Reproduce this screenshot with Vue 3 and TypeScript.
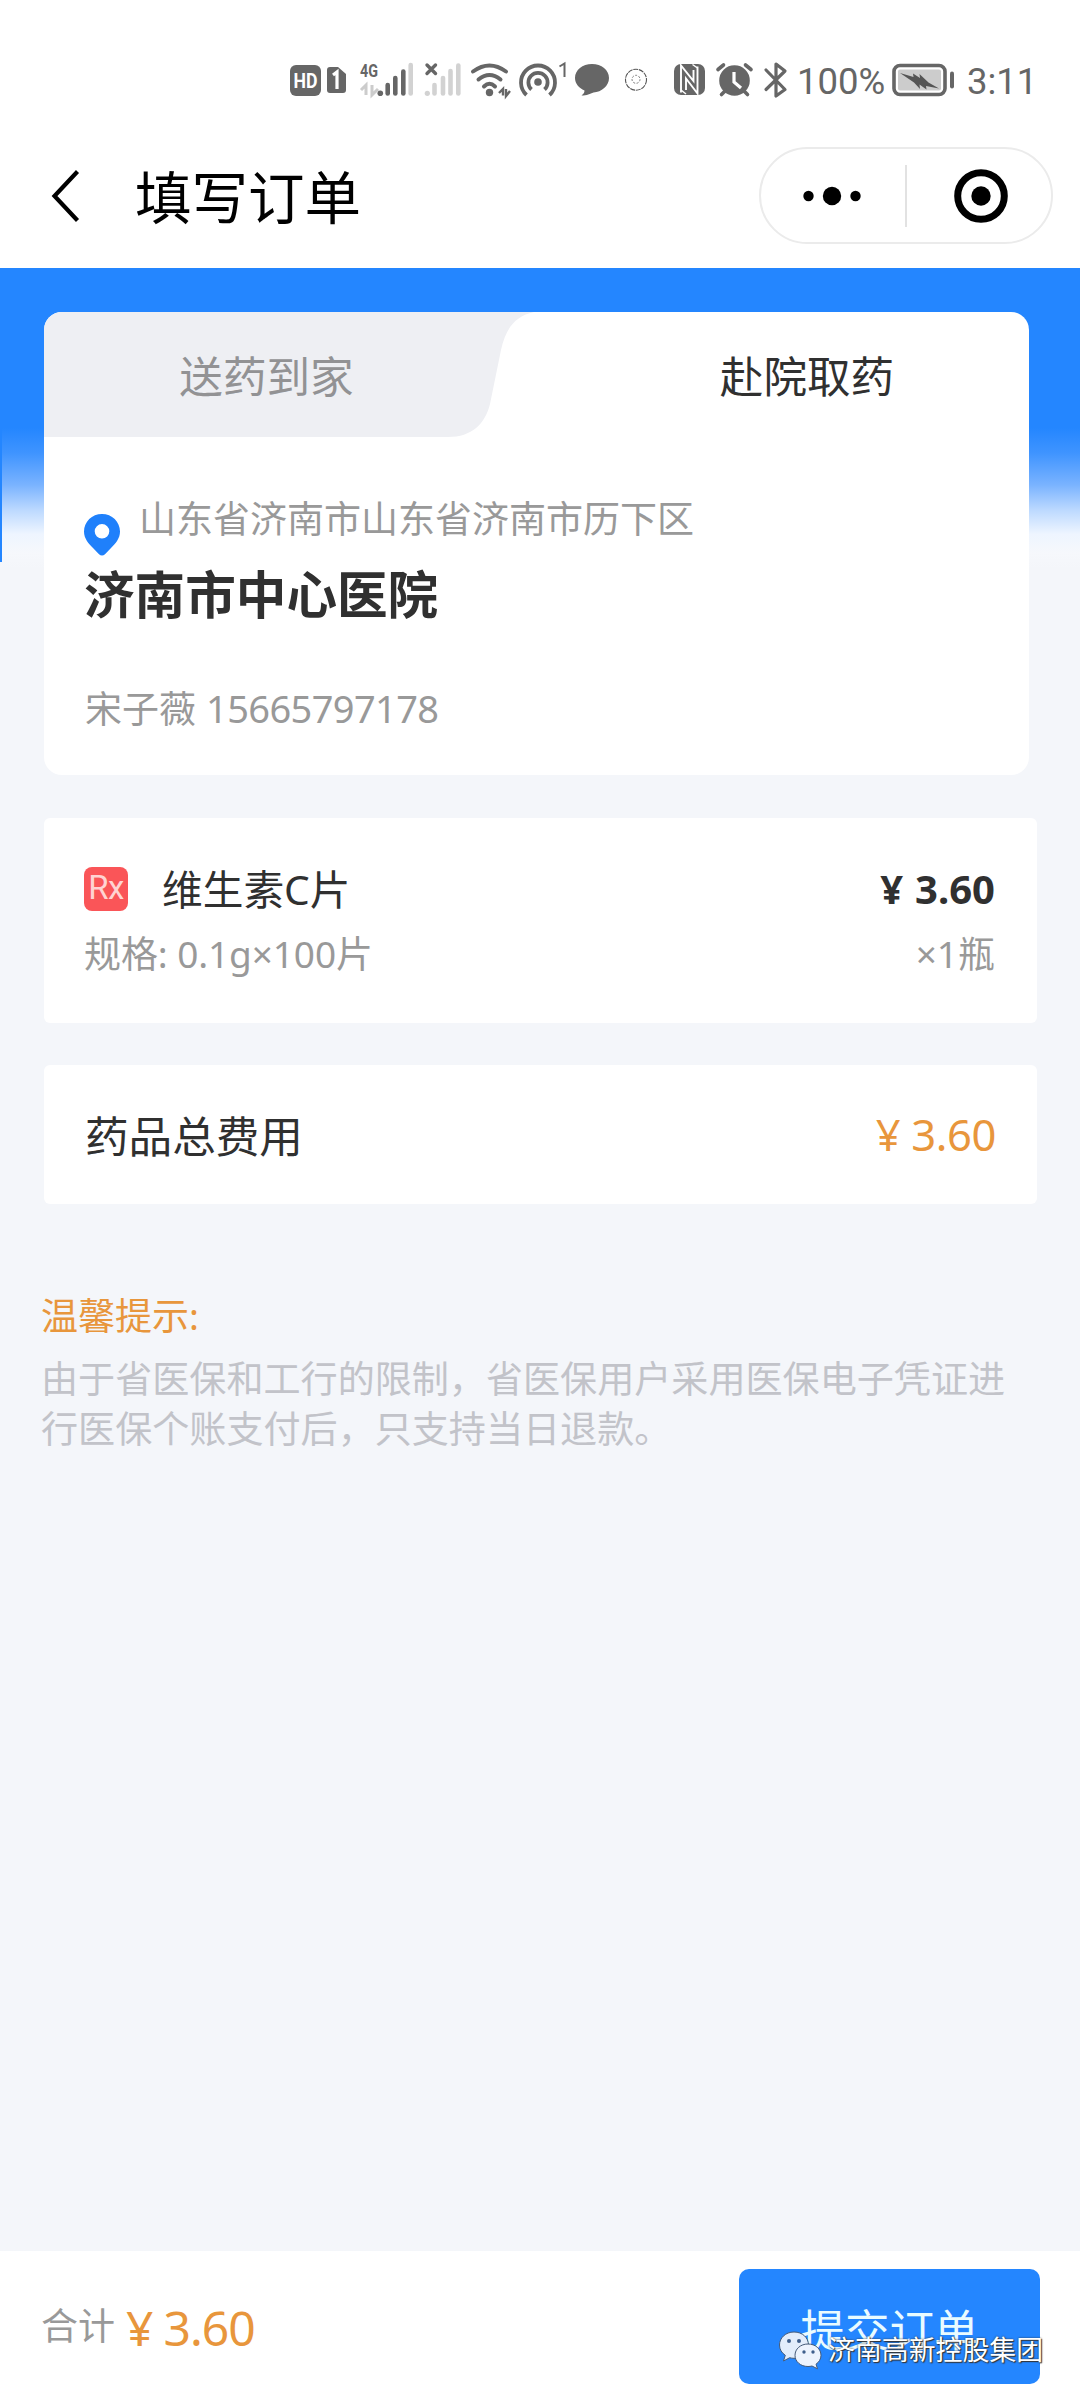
<script setup lang="ts">
interface Medicine {
  name: string
  spec: string
  price: string
  count: string
}

const pickup = {
  region: '山东省济南市山东省济南市历下区',
  hospital: '济南市中心医院',
  contact: '宋子薇',
  phone: '15665797178',
}

const medicine: Medicine = {
  name: '维生素C片',
  spec: '规格: 0.1g×100片',
  price: '3.60',
  count: '×1瓶',
}

const total = '3.60'
const notice = '由于省医保和工行的限制，省医保用户采用医保电子凭证进行医保个账支付后，只支持当日退款。'

const signalBars = [
  { x: 107.7, top: 27 },
  { x: 115.3, top: 20 },
  { x: 123.3, top: 13.5 },
]
const idleBars = [
  { x: 154.5, top: 28 },
  { x: 163, top: 21 },
  { x: 170.5, top: 14 },
  { x: 178.3, top: 8.5 },
]
</script>

<template>
  <div class="page" lang="zh-CN">
    <div class="status">
      <svg class="status-left" width="370" height="48" viewBox="0 0 370 48" fill="none">
        <!-- HD voice -->
        <rect x="10" y="9" width="31" height="31" rx="6" fill="#666" />
        <text x="25.5" y="31.5" class="hd" textLength="24" lengthAdjust="spacingAndGlyphs">HD</text>
        <!-- SIM 1 -->
        <path d="M50 11h8l8 7v16a3 3 0 0 1-3 3H50a3 3 0 0 1-3-3V14a3 3 0 0 1 3-3z" fill="#666" />
        <path d="M53 19l4-3v17" stroke="#fff" stroke-width="3.2" />
        <!-- 4G signal -->
        <text x="80" y="20.8" class="net" textLength="18" lengthAdjust="spacingAndGlyphs">4G</text>
        <path d="M86 39V29l-5 5M92 29v10l6-6" stroke="#ccc" stroke-width="3" />
        <circle cx="100.3" cy="37.3" r="2.8" fill="#666" />
        <path
          v-for="bar in signalBars"
          :key="bar.x"
          :d="`M${bar.x} ${bar.top + 2}V37.5`"
          stroke="#666"
          stroke-width="4.6"
          stroke-linecap="round"
        />
        <path d="M130.7 9V37.5" stroke="#d2d2d2" stroke-width="4.6" stroke-linecap="round" />
        <!-- second SIM, no service -->
        <path d="M147 9l8.5 8.5M155.5 9l-8.5 8.5" stroke="#666" stroke-width="3.4" stroke-linecap="round" />
        <circle cx="147.3" cy="37.3" r="2.6" fill="#d2d2d2" />
        <path
          v-for="bar in idleBars"
          :key="bar.x"
          :d="`M${bar.x} ${bar.top + 1}V37.5`"
          stroke="#d2d2d2"
          stroke-width="4.6"
          stroke-linecap="round"
        />
        <!-- Wi-Fi -->
        <g stroke="#666" stroke-width="4" stroke-linecap="round">
          <path d="M193 15.5Q209.5 3.5 226 15.5" />
          <path d="M198.5 23.5Q209.5 14.5 220.5 23.5" />
          <path d="M204 30.5Q209.5 25 215 30.5" />
        </g>
        <circle cx="209.5" cy="36.5" r="3.7" fill="#666" />
        <path d="M223 39.5V33l-4 4M226 33v7l4-5" stroke="#666" stroke-width="2.4" />
        <!-- hotspot -->
        <circle cx="258" cy="26" r="3.8" fill="#666" />
        <path d="M251.5 33.5A9.6 9.6 0 1 1 264.5 33.5" stroke="#666" stroke-width="3.8" />
        <path d="M246.5 39A17 17 0 1 1 269.5 39" stroke="#666" stroke-width="3.8" />
        <path d="M279.5 10.5l5-3V21" stroke="#666" stroke-width="2" />
        <!-- message -->
        <path d="M312 8c9.5 0 17 6 17 14s-7.5 14-15.5 14.5c-3.5 1.5-6.5 3-12 3 2-1.5 3-3 3-5-5.500-2.500-9.500-7-9.500-12.500 0-8 7.500-14 17-14z" fill="#666" />
        <!-- sync ring -->
        <circle cx="356" cy="23.7" r="10.5" stroke="#555" stroke-width="1.1" stroke-dasharray="5 .8" />
        <circle cx="356" cy="23.3" r="4" stroke="#777" stroke-width="1" stroke-dasharray="2 1.5" />
      </svg>
      <svg class="status-mid" width="116" height="48" viewBox="0 0 116 48" fill="none">
        <!-- NFC -->
        <rect x="2" y="8" width="31" height="31" rx="7" fill="#666" />
        <path d="M9 36.500V9.500L21.500 25V14" stroke="#fff" stroke-width="1.900" />
        <path d="M25.500 10.500V37.500L14 22.500V34" stroke="#fff" stroke-width="1.900" />
        <path d="M9 34L14 38M20.500 8.500L25.500 12" stroke="#fff" stroke-width="1.500" />
        <!-- alarm -->
        <circle cx="62.5" cy="24.5" r="15.3" fill="#666" />
        <path d="M46 13.5l5.5-4.5M79 13.5L73.5 9M49.5 38.5l4-4M75.5 38.5l-4-4" stroke="#666" stroke-width="3.6" stroke-linecap="round" />
        <path d="M62 16v10l7 6" stroke="#fff" stroke-width="3.2" />
        <!-- bluetooth -->
        <path d="M94 14l19 19.500-9 6.500V8l9 7L94 33.500" stroke="#666" stroke-width="3.200" stroke-linejoin="round" stroke-linecap="round" />
      </svg>
      <span class="status-text battery-text">100%</span>
      <svg class="battery" width="66" height="36" viewBox="0 0 66 36" fill="none">
        <rect x="3" y="3.5" width="51" height="29" rx="6" stroke="#666" stroke-width="3.6" />
        <rect x="7" y="7.5" width="43" height="21" rx="2" fill="#ccc" />
        <path d="M9 11l13.500 4-.500-3.500 7 4.500-.500-4 9 8.500 10.500 6-13-2.500.500 3.500-7-5 .500 4.500-6-6.500z" fill="#555" />
        <path d="M61 11.500v13" stroke="#666" stroke-width="4" stroke-linecap="round" />
      </svg>
      <span class="status-text clock">3:11</span>
    </div>

    <header class="nav">
      <svg class="back" width="32" height="56" viewBox="0 0 32 56" fill="none">
        <path d="M27.5 3.5L4.5 28l23 24.5" stroke="#000" stroke-width="4.2" />
      </svg>
      <h1 class="nav-title">填写订单</h1>
      <div class="capsule">
        <svg class="dots" width="60" height="20" viewBox="0 0 60 20">
          <circle cx="6.5" cy="10" r="5.2" />
          <circle cx="30" cy="10" r="9.2" />
          <circle cx="53.5" cy="10" r="5.2" />
        </svg>
        <i class="split"></i>
        <svg class="target" width="56" height="56" viewBox="0 0 56 56">
          <circle cx="28" cy="28" r="23.3" fill="none" stroke="#000" stroke-width="7" />
          <circle cx="28" cy="28" r="9.7" />
        </svg>
      </div>
    </header>

    <main class="content">
      <section class="card pickup">
        <div class="tabs">
          <svg class="tab-shape" width="500" height="125" viewBox="0 0 500 125">
            <path d="M0 0H490C472 4 462 15 457 38L446 92C441 112 428 125 404 125H0z" fill="#eeeff3" />
          </svg>
          <span class="tab">送药到家</span>
          <span class="tab active">赴院取药</span>
        </div>
        <div class="region">
          <svg class="pin" width="36" height="42" viewBox="0 0 36 42">
            <path fill-rule="evenodd" d="M18 0C28 0 36 7.800 36 17.500c0 7-4.500 12-9 16.500l-6 6.200c-1.800 1.800-4.200 1.800-6 0L9 34C4.500 29.500 0 24.500 0 17.500 0 7.800 8 0 18 0zm0 10a7.300 7.300 0 1 0 0 14.600A7.300 7.300 0 0 0 18 10z" fill="#1f80fb" />
          </svg>
          <span>{{ pickup.region }}</span>
        </div>
        <h2 class="hospital">{{ pickup.hospital }}</h2>
        <p class="contact">{{ pickup.contact }}<span class="phone">{{ pickup.phone }}</span></p>
      </section>

      <section class="card medicine">
        <div class="row">
          <span class="rx">Rx</span>
          <span class="med-name">{{ medicine.name }}</span>
          <span class="price bold"><i>¥</i>{{ medicine.price }}</span>
        </div>
        <div class="row sub">
          <span class="spec">{{ medicine.spec }}</span>
          <span class="count">{{ medicine.count }}</span>
        </div>
      </section>

      <section class="card total">
        <span class="total-label">药品总费用</span>
        <span class="price"><i>¥</i>{{ total }}</span>
      </section>

      <section class="tips">
        <h3>温馨提示:</h3>
        <p>{{ notice }}</p>
      </section>
    </main>

    <footer class="bar">
      <span class="sum-label">合计</span>
      <span class="price large"><i>¥</i>{{ total }}</span>
      <button class="submit" type="button">提交订单</button>
      <div class="account">
        <svg width="46" height="40" viewBox="0 0 46 40">
          <g stroke="#445a78" stroke-width="1">
            <path d="M16 2C7.500 2 1.500 8 1.500 15c0 4.500 2.300 8 5.800 10.300L5.500 31l6.200-3.300c1.300.4 2.800.6 4.300.6 8.500 0 14.500-6 14.500-13.300S24.500 2 16 2z" fill="#e3edfb" />
            <path d="M30 14c-7.500 0-13 5-13 11.300S22.500 36.500 30 36.500c1.500 0 2.700-.2 4-.5l5.500 2.800-1.500-4.600c3-2 5-5.200 5-8.900C43 19 37.500 14 30 14z" fill="#edf3fd" />
          </g>
          <g fill="#3f5f8c">
            <circle cx="11" cy="11" r="2" /><circle cx="21" cy="11" r="2" />
            <circle cx="26" cy="22" r="1.700" /><circle cx="35" cy="22" r="1.700" />
          </g>
        </svg>
        <span>济南高新控股集团</span>
      </div>
    </footer>
  </div>
</template>

<style>
body {
  margin: 0;
  background: #f4f6fa;
}
</style>

<style scoped>
.page {
  display: flex;
  flex-direction: column;
  width: 1080px;
  height: 2400px;
  overflow: hidden;
  background: #f4f6fa;
  font-family: 'Noto Sans', 'Noto Sans CJK SC', sans-serif;
  color: #303030;
}

h1,
h2,
h3,
p {
  margin: 0;
  font-weight: 400;
}

i {
  font-style: normal;
}

svg {
  display: block;
  flex: none;
}

.status {
  display: flex;
  align-items: flex-start;
  height: 72px;
  padding: 56px 0 0 280px;
  background: #fff;
}

.hd {
  font: 700 20px Roboto, sans-serif;
  fill: #fff;
  text-anchor: middle;
}

.net {
  font: 700 18.5px Roboto, sans-serif;
  fill: #666;
}

.status-mid {
  margin-left: 22px;
}

.status-text {
  font-family: Roboto, sans-serif;
  font-size: 36.5px;
  line-height: 48px;
  margin-top: 2px;
  color: #666;
  white-space: nowrap;
}

.battery-text {
  width: 93px;
  margin-left: 9px;
}

.battery {
  margin: 6px 0 0 1px;
}

.clock {
  margin-left: 10px;
}

.nav {
  display: flex;
  align-items: flex-start;
  height: 140px;
  background: #fff;
}

.back {
  margin: 40px 0 0 50px;
}

.nav-title {
  margin: 34px 0 0 53px;
  font-size: 56.5px;
  line-height: 72px;
  color: #000;
}

.capsule {
  display: flex;
  align-items: center;
  box-sizing: border-box;
  width: 294px;
  height: 97px;
  margin: 19px 27px 0 auto;
  border: 2px solid #ebebeb;
  border-radius: 49px;
}

.dots {
  margin-left: 41px;
}

.split {
  width: 2px;
  height: 62px;
  margin: 0 46px 0 43px;
  background: #e2e2e2;
}

.content {
  flex: 1;
  padding: 44px 43px 0 44px;
  background:
    linear-gradient(#2486ff, #2486ff) 0 0 / 2px 294px no-repeat,
    linear-gradient(#2486ff 0, #2486ff 160px, #3f94ff 185px, #7ab3ff 217px, #bcd9ff 242px, #eef5ff 266px, #f6f8fc 285px, #f4f6fa 300px) 0 0 / 100% 300px no-repeat;
}

.card {
  box-sizing: border-box;
  background: #fff;
  border-radius: 6px;
}

.pickup {
  width: 985px;
  height: 463px;
  border-radius: 18px;
  overflow: hidden;
}

.tabs {
  position: relative;
  display: flex;
  height: 125px;
}

.tab-shape {
  position: absolute;
  left: 0;
  top: 0;
}

.tab {
  position: relative;
  width: 445px;
  font-size: 43.6px;
  line-height: 128px;
  text-align: center;
  color: #929294;
}

.tab.active {
  width: 540px;
  padding-left: 96px;
  box-sizing: border-box;
  color: #303030;
}

.region {
  display: flex;
  height: 60px;
  margin: 53px 0 0 40px;
  font-size: 37px;
  line-height: 58px;
  color: #999;
}

.pin {
  margin: 24px 19px 0 0;
}

.hospital {
  margin: 15px 0 0 40px;
  font-size: 50.6px;
  line-height: 60px;
  font-weight: 700;
}

.contact {
  margin: 58px 0 0 41px;
  font-size: 37px;
  line-height: 50px;
  color: #999;
}

.phone {
  margin-left: 10px;
  font-size: 38px;
  letter-spacing: -0.6px;
}

.medicine {
  height: 205px;
  margin-top: 43px;
  padding: 46px 42px 0 40px;
}

.row {
  display: flex;
  align-items: center;
  height: 50px;
  line-height: 50px;
}

.rx {
  width: 44px;
  height: 44px;
  margin-right: 34px;
  border-radius: 8px;
  background: #fa5558;
  color: #ffd3d2;
  font: 400 33px/42px Roboto, sans-serif;
  letter-spacing: -0.5px;
  text-align: center;
}

.med-name {
  font-size: 40.7px;
}

.price {
  margin-left: auto;
  font-size: 43.5px;
  letter-spacing: -0.4px;
  color: #e8963c;
  white-space: nowrap;
}

.price i {
  margin-right: 11px;
}

.price.bold {
  font-size: 40px;
  font-weight: 700;
  letter-spacing: 0;
  color: #303030;
}

.price.bold i {
  margin-right: 12px;
}

.sub {
  justify-content: space-between;
  margin-top: 15px;
  font-size: 37px;
  color: #999;
}

.spec {
  letter-spacing: -0.1px;
}

.total {
  display: flex;
  align-items: center;
  height: 139px;
  margin-top: 42px;
  padding: 0 41px 1px 41px;
}

.total-label {
  font-size: 43.6px;
}

.tips {
  width: 972px;
  margin: 87px 0 0 -3px;
}

.tips h3 {
  font-size: 37px;
  line-height: 50px;
  color: #e8963c;
}

.tips p {
  margin-top: 13px;
  font-size: 37.1px;
  line-height: 49.5px;
  color: #c2c3c9;
}

.bar {
  position: relative;
  display: flex;
  align-items: center;
  height: 149px;
  box-sizing: border-box;
  padding: 2px 40px 0 41px;
  background: #fff;
}

.sum-label {
  font-size: 37px;
  line-height: 50px;
  margin-top: -2px;
  color: #999;
}

.price.large {
  margin: 2px 0 0 11px;
  font-size: 48px;
  letter-spacing: -1px;
}

.submit {
  width: 301px;
  height: 115px;
  margin-left: auto;
  padding: 2px 0 0;
  border: 0;
  border-radius: 10px;
  background: #2486ff;
  color: #e9fbff;
  font: inherit;
  font-size: 44.5px;
}

.account {
  position: absolute;
  left: 778px;
  top: 79px;
  display: flex;
  align-items: center;
  gap: 4px;
  font-size: 26.9px;
  line-height: 40px;
  color: #fff;
  white-space: nowrap;
  text-shadow: 1px 1px 1px #333, 0 0 2px #333;
}
</style>
